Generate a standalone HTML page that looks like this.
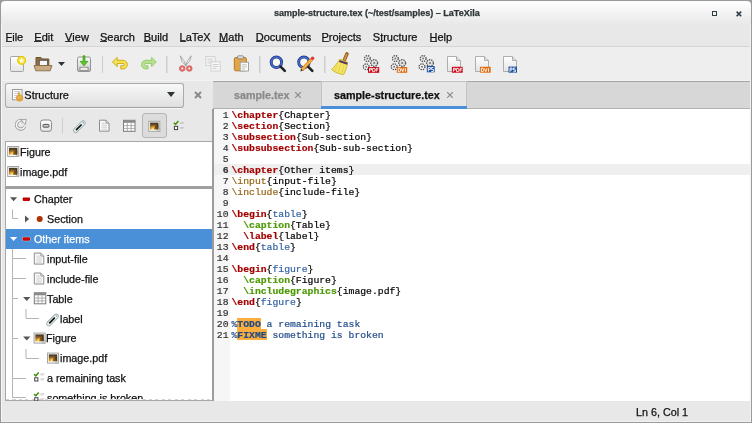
<!DOCTYPE html>
<html><head><meta charset="utf-8">
<style>
*{margin:0;padding:0;box-sizing:border-box}
html,body{width:752px;height:423px;overflow:hidden;background:#9a9a9a}
body{position:relative;font-family:"Liberation Sans",sans-serif;font-size:10.75px;color:#111}
.t,.menu span{-webkit-text-stroke:0.25px currentColor}
.a{position:absolute}
.t{position:absolute;white-space:nowrap;line-height:12px}
#win{position:absolute;left:0;top:0;width:752px;height:423px;background:#e8e8e8;overflow:hidden;will-change:transform}
#frame{position:absolute;left:0;top:0;width:752px;height:423px;border:1px solid #9a9a9a}
#title{position:absolute;left:0;top:0;width:752px;height:25px;background:linear-gradient(#fdfdfd 10%,#e8e8e8)}
#menubar{position:absolute;left:0;top:25px;width:752px;height:21px;background:#e8e8e8}
.menu span{position:absolute;top:31px;white-space:nowrap;line-height:12px;font-size:11px}
.menu u{text-decoration:none;position:relative}
.menu u::after{content:"";position:absolute;left:0;right:0;top:9.6px;height:1px;background:#2e3436}
#sep1{position:absolute;left:0;top:46px;width:752px;height:1px;background:#d5d5d5}
#sep1b{position:absolute;left:0;top:80px;width:752px;height:1px;background:#f3f3f3}
#toolbar{position:absolute;left:0;top:47px;width:752px;height:34px;background:#eeeeee}
.vsep{position:absolute;width:1px;background:#cfcfcf}
#code{position:absolute;left:231.5px;top:109.8px;font-family:"Liberation Mono",monospace;font-size:9.75px;line-height:11px;color:#000;white-space:pre;-webkit-text-stroke:0.2px currentColor}
#gutter{position:absolute;left:214px;top:109px;width:16px;height:292px;background:#f6f6f6}
#nums{position:absolute;left:216px;top:109.8px;font-family:"Liberation Mono",monospace;font-size:9.75px;line-height:11px;color:#333;white-space:pre;text-align:right;width:12.5px;-webkit-text-stroke:0.2px currentColor}
.r{color:#a40000;font-weight:bold}
.g{color:#4e9a06;font-weight:bold}
.o{color:#976617}
.b{color:#3465a4}
.c{color:#234d8c}
.hl{font-weight:bold;color:#204a87}
.tree .t{top:0}
</style></head><body>
<div id="win">
  <div id="title"></div>
  <div class="t" style="left:274px;top:7px;font-size:9px;font-weight:bold;color:#2e3436">sample-structure.tex (~/test/samples) – LaTeXila</div>
  <!-- title buttons -->
  <div class="a" style="left:711.8px;top:11px;width:4.8px;height:4.8px;border:1.6px solid #2e3e44"></div>
  <svg class="a" style="left:736px;top:10.5px" width="6" height="6" viewBox="0 0 6 6"><path d="M0.6 0.6L5.2 5.2M5.2 0.6L0.6 5.2" stroke="#2e3e44" stroke-width="1.6"/></svg>

  <div id="menubar"></div>
  <div class="menu">
    <span style="left:5.5px"><u>F</u>ile</span>
    <span style="left:34.3px"><u>E</u>dit</span>
    <span style="left:65px"><u>V</u>iew</span>
    <span style="left:100px"><u>S</u>earch</span>
    <span style="left:143.7px"><u>B</u>uild</span>
    <span style="left:179.5px"><u>L</u>aTeX</span>
    <span style="left:219.1px"><u>M</u>ath</span>
    <span style="left:255.7px"><u>D</u>ocuments</span>
    <span style="left:321.5px"><u>P</u>rojects</span>
    <span style="left:372.8px">S<u>t</u>ructure</span>
    <span style="left:429.5px"><u>H</u>elp</span>
  </div>
  <div id="sep1"></div>
  <div id="toolbar"></div>
  <div id="sep1b"></div>
  <!-- toolbar separators -->
  <div class="vsep" style="left:102px;top:56px;height:17px"></div>
  <div class="vsep" style="left:166px;top:56px;height:17px"></div>
  <div class="vsep" style="left:259px;top:56px;height:17px"></div>
  <div class="vsep" style="left:324px;top:56px;height:17px"></div>

  <!-- content area -->
  

  <!-- left pane -->
  <div class="a" style="left:5px;top:83px;width:179px;height:25px;border:1px solid #ababab;border-bottom-color:#a0a0a0;border-radius:3px;background:linear-gradient(#f8f8f8,#dfdfdf)"></div><div class="a" style="left:7px;top:108px;width:175px;height:1px;background:#f6f6f6"></div>
  <div class="t" style="left:24.3px;top:88.8px;font-size:11px">Structure</div>
  <svg class="a" style="left:11px;top:88px" width="15" height="14" viewBox="0 0 15 14"><rect x="1.5" y="1.5" width="9.5" height="10.3" fill="#fff" stroke="#9a9a9a"/><path d="M3 3.5H9.5M3 5.5H9.5M3 7.5H6M3 9.5H6" stroke="#b8c4cc" stroke-width="0.8"/><circle cx="8.6" cy="10" r="3.6" fill="#e2a23c"/><rect x="6.8" y="4" width="2.2" height="5" rx="1" fill="#e2a23c"/><path d="M7 10.5L8.6 8.5L10.2 10.5" stroke="#f4d090" stroke-width="0.8" fill="none"/></svg>
  <svg class="a" style="left:167px;top:92px" width="8" height="5"><path d="M0 0H8L4 5Z" fill="#2e3436"/></svg>
  <svg class="a" style="left:194px;top:91px" width="8" height="8"><path d="M1 1L7 7M7 1L1 7" stroke="#8a8a8a" stroke-width="2"/></svg>

  <!-- structure toolbar pressed button -->
  <div class="a" style="left:142px;top:113px;width:25px;height:25px;border:1px solid #b6b6b3;border-radius:3px;background:#dcdcdc"></div>
  <div class="vsep" style="left:62px;top:118px;height:15px"></div>

  <!-- top list box -->
  <div class="a" style="left:5px;top:141px;width:208px;height:47px;border:1px solid #a8a8a8;border-bottom:none;background:#fff"></div>
  <div class="t" style="left:20px;top:145.6px">Figure</div>
  <div class="t" style="left:20px;top:165.5px">image.pdf</div>
  <div class="a" style="left:5px;top:186px;width:208px;height:3px;background:#a0a0a0"></div>

  <!-- tree box -->
  <div class="a" style="left:5px;top:189px;width:208px;height:212px;border:1px solid #a8a8a8;border-top:none;background:#fff"></div>
  <div class="a" style="left:6px;top:229.3px;width:206px;height:19.3px;background:#4a90d9"></div>
  <div class="t" style="left:34px;top:193.0px">Chapter</div>
  <div class="t" style="left:47px;top:212.9px">Section</div>
  <div class="t" style="left:34px;top:232.8px;color:#fff">Other items</div>
  <div class="t" style="left:47px;top:252.8px">input-file</div>
  <div class="t" style="left:47px;top:272.7px">include-file</div>
  <div class="t" style="left:47px;top:292.6px">Table</div>
  <div class="t" style="left:60px;top:312.5px">label</div>
  <div class="t" style="left:46px;top:332.4px">Figure</div>
  <div class="t" style="left:60px;top:352.4px">image.pdf</div>
  <div class="t" style="left:47px;top:372.3px">a remaining task</div>
  <div class="a" style="left:6px;top:399px;width:206px;height:1px;background:repeating-linear-gradient(90deg,#d4d4d4 0 3px,transparent 3px 6.5px)"></div>
  <div class="a" style="left:6px;top:390px;width:206px;height:9px;overflow:hidden"><div class="t" style="left:41px;top:2.2px">something is broken</div></div>

  <!-- pane border -->
  <div class="a" style="left:213px;top:81px;width:1px;height:28px;background:#a0a0a0"></div><div class="a" style="left:212px;top:109px;width:2px;height:292px;background:#9c9c9c"></div>

  <!-- notebook tabs -->
  <div class="a" style="left:213px;top:81px;width:539px;height:27px;background:#d7d7d7;border-top:1px solid #a6a6a6"></div>
  <div class="a" style="left:321px;top:81px;width:146px;height:27px;background:#e6e6e6;border-top:1px solid #c0c0c0;border-left:1px solid #c4c4c4;border-right:1px solid #c4c4c4"></div>
  
  <div class="t" style="left:234px;top:89px;color:#8a8a8a;font-weight:bold">sample.tex</div>
  <div class="t" style="left:334px;top:89px;font-weight:bold">sample-structure.tex</div>
  <svg class="a" style="left:295px;top:92px" width="6" height="6"><path d="M0 0L6 6M6 0L0 6" stroke="#8a8a8a" stroke-width="1.2"/></svg>
  <svg class="a" style="left:447px;top:92px" width="6" height="6"><path d="M0 0L6 6M6 0L0 6" stroke="#8a8a8a" stroke-width="1.2"/></svg>
  <div class="a" style="left:214px;top:108px;width:538px;height:1px;background:#b2b2b2"></div><div class="a" style="left:321px;top:106.2px;width:146px;height:2.5px;background:#4a90d9"></div>

  <!-- editor -->
  <div class="a" style="left:214px;top:109px;width:536px;height:292px;background:#fff"></div>
  <div id="gutter"></div>
  <div class="a" style="left:214px;top:164px;width:536px;height:11px;background:#efefef"></div>
<div class="a" style="left:237.2px;top:318px;width:23.7px;height:11px;background:#fcaf3e"></div><div class="a" style="left:237.2px;top:329px;width:29.5px;height:11px;background:#fcaf3e"></div>
<div id="nums"> 1
 2
 3
 4
 5
<b> 6</b>
 7
 8
 9
10
11
12
13
14
15
16
17
18
19
20
21</div>
<div id="code"><span class="r">\chapter</span>{Chapter}
<span class="r">\section</span>{Section}
<span class="r">\subsection</span>{Sub-section}
<span class="r">\subsubsection</span>{Sub-sub-section}

<span class="r">\chapter</span>{Other items}
<span class="o">\input</span>{input-file}
<span class="o">\include</span>{include-file}

<span class="r">\begin</span>{<span class="b">table</span>}
  <span class="g">\caption</span>{Table}
  <span class="r">\label</span>{label}
<span class="r">\end</span>{<span class="b">table</span>}

<span class="r">\begin</span>{<span class="b">figure</span>}
  <span class="g">\caption</span>{Figure}
  <span class="g">\includegraphics</span>{image.pdf}
<span class="r">\end</span>{<span class="b">figure</span>}

<span class="c">%<span class="hl">TODO</span> a remaining task</span>
<span class="c">%<span class="hl">FIXME</span> something is broken</span></div>


<svg class="a" style="left:0;top:0" width="752" height="423" viewBox="0 0 752 423">
<defs>
 <linearGradient id="gpage" x1="0" y1="0" x2="0" y2="1"><stop offset="0" stop-color="#ffffff"/><stop offset="1" stop-color="#e4e4e4"/></linearGradient>
 <linearGradient id="gsave" x1="0" y1="0" x2="0" y2="1"><stop offset="0" stop-color="#f8f8f8"/><stop offset="0.6" stop-color="#e0e0e0"/><stop offset="1" stop-color="#b4b4b4"/></linearGradient>
 <radialGradient id="gphoto" cx="0.4" cy="0.95" r="0.85"><stop offset="0" stop-color="#fff4a0"/><stop offset="0.3" stop-color="#f0b030"/><stop offset="0.65" stop-color="#8a6028"/><stop offset="1" stop-color="#4a3a24"/></radialGradient>
</defs>

<!-- new document -->
<rect x="10.5" y="56.5" width="13" height="15" rx="1" fill="url(#gpage)" stroke="#a4a4a4"/>
<circle cx="21.6" cy="60.4" r="3.9" fill="#f8e040" stroke="#e4c800" stroke-width="1.2"/>
<path d="M21.6 57.6L22.5 59.5L24.5 59.7L23 61L23.4 63L21.6 62L19.8 63L20.2 61L18.7 59.7L20.7 59.5Z" fill="#fffbe0"/>

<!-- open folder -->
<path d="M36 57.5H41L42.5 59H48.8V66H36Z" fill="#8f6d42" stroke="#6e522c"/>
<rect x="39.3" y="60.3" width="8.3" height="5.3" fill="#f6f6f6" stroke="#555" stroke-width="0.9"/>
<path d="M34 65.5H52L50.2 70.8H35.8Z" fill="#c9ab83" stroke="#8a6c44" stroke-width="0.9"/>
<path d="M58 62H65L61.5 66Z" fill="#2e3436"/>

<!-- save -->
<rect x="77.5" y="57" width="13" height="14.5" rx="1.5" fill="url(#gsave)" stroke="#959595"/>
<rect x="80" y="67.2" width="8" height="3.4" fill="#ececec" stroke="#7a7a7a" stroke-width="0.7"/>
<path d="M83.1 55.8H84.9V61.4H87.8L84 65.8L80.2 61.4H83.1Z" fill="#5cc82c" stroke="#3a9a10" stroke-width="0.8"/>

<!-- separators -->
<rect x="102" y="56" width="1" height="17" fill="#cdcdcd"/>
<rect x="166.5" y="56" width="1" height="17" fill="#cdcdcd"/>
<rect x="259.5" y="56" width="1" height="17" fill="#cdcdcd"/>
<rect x="324.5" y="56" width="1" height="17" fill="#cdcdcd"/>

<!-- undo -->
<path d="M112.5 62L117.2 57.4V60.3H123A4.3 4.3 0 0 1 123 68.9H120.8V65.8H123A1.2 1.2 0 0 0 123 63.4H117.2V66.6Z" fill="#f6e45a" stroke="#c8a400" stroke-width="0.9" stroke-linejoin="round"/>
<!-- redo -->
<g transform="translate(268.8 0) scale(-1 1)"><path d="M112.5 62L117.2 57.4V60.3H123A4.3 4.3 0 0 1 123 68.9H120.8V65.8H123A1.2 1.2 0 0 0 123 63.4H117.2V66.6Z" fill="#b8e290" stroke="#8ec864" stroke-width="0.9" stroke-linejoin="round"/></g>

<!-- cut -->
<path d="M180.3 55.8Q180.5 61.5 186.3 66.2Q184.5 60.5 180.3 55.8ZM191.2 55.8Q191 61.5 185.2 66.2Q187 60.5 191.2 55.8Z" fill="#fafafa" stroke="#a0a0a0" stroke-width="0.9"/>
<circle cx="182.2" cy="68.5" r="2.8" fill="#e27070" stroke="#d45a5a" stroke-width="0.8"/>
<circle cx="189.3" cy="68.5" r="2.8" fill="#e27070" stroke="#d45a5a" stroke-width="0.8"/>
<circle cx="182.3" cy="68.4" r="0.9" fill="#fff"/>
<circle cx="189.2" cy="68.4" r="0.9" fill="#fff"/>

<!-- copy (disabled) -->
<rect x="205.8" y="56.5" width="9.2" height="9" fill="#f6f6f6" stroke="#d2d2d2"/>
<path d="M207.5 59H213M207.5 61H213M207.5 63H211" stroke="#cfcfcf" stroke-width="1"/>
<rect x="211" y="61.8" width="9.2" height="9.2" fill="#f6f6f6" stroke="#d2d2d2"/>
<path d="M212.8 64.5H218.5M212.8 66.5H218.5M212.8 68.5H216.5" stroke="#cfcfcf" stroke-width="1"/>

<!-- paste -->
<rect x="234.3" y="57.5" width="12" height="13.3" rx="1.5" fill="#e2a64a" stroke="#b27a22"/>
<rect x="237.5" y="55.8" width="6" height="3" rx="0.8" fill="#dedede" stroke="#7a7a7a" stroke-width="0.8"/>
<rect x="240.2" y="62.2" width="8.3" height="8.8" fill="#fafafa" stroke="#9a9a9a" stroke-width="0.9"/>
<path d="M241.8 64.8H246.8M241.8 66.8H246.8M241.8 68.8H245" stroke="#b0b0b0" stroke-width="0.8"/>

<!-- find -->
<circle cx="276.4" cy="62.3" r="5.2" fill="#fbfbf2" stroke="#223f96" stroke-width="3"/><circle cx="276.4" cy="62.3" r="5.2" fill="none" stroke="#5272cc" stroke-width="1.2"/>
<path d="M280.6 66.6L284.8 70.8" stroke="#222" stroke-width="2.6" stroke-linecap="round"/>
<!-- find replace -->
<circle cx="303.9" cy="62.3" r="5.2" fill="#fbfbf2" stroke="#223f96" stroke-width="3"/><circle cx="303.9" cy="62.3" r="5.2" fill="none" stroke="#5272cc" stroke-width="1.2"/>
<path d="M308.1 66.6L312.3 70.8" stroke="#222" stroke-width="2.6" stroke-linecap="round"/>
<path d="M302 69.8L311.8 59.2" stroke="#c87818" stroke-width="3.4"/>
<path d="M302 69.8L311.8 59.2" stroke="#f8b040" stroke-width="2"/>
<circle cx="312.6" cy="58.3" r="1.7" fill="#e03838"/>
<path d="M300.3 71.5L301.2 68.6L302.9 70.4Z" fill="#333"/>

<!-- broom -->
<path d="M347 53.8L344.2 60.4" stroke="#a06a28" stroke-width="3.6" stroke-linecap="round"/><path d="M346.6 54.6L344.6 59.4" stroke="#d09a50" stroke-width="1.4" stroke-linecap="round"/>
<path d="M339.8 59.3L347.6 62.2C347.4 66.5 345.5 71 343.6 74.6C339.2 74.2 334.5 72.2 331.6 69.6C334.8 66.4 337.8 62.5 339.8 59.3Z" fill="#f4e466" stroke="#cbb420" stroke-width="0.9"/>
<path d="M337 66L335 70.5M340.5 64L338.5 72.5M344 64.5L342 73.5" stroke="#e0cc40" stroke-width="0.7"/>
<path d="M339.3 61L347.4 63.8" stroke="#5c3566" stroke-width="2"/>

<!-- build icons -->
<g transform="translate(362.8 55.2)"><circle cx="4.6" cy="3.4" r="2.9" fill="#f0f0f0" stroke="#505050" stroke-width="1.3" stroke-dasharray="1.4 0.9"/>
   <circle cx="4.6" cy="3.4" r="1" fill="#777"/>
   <circle cx="11.4" cy="7.8" r="3.4" fill="#e4e4e4" stroke="#505050" stroke-width="1.3" stroke-dasharray="1.5 0.9"/>
   <circle cx="11.4" cy="7.8" r="1.1" fill="#777"/>
   <circle cx="3.4" cy="11.6" r="2.9" fill="#f4f4f4" stroke="#505050" stroke-width="1.3" stroke-dasharray="1.4 0.9"/>
   <circle cx="3.4" cy="11.6" r="1" fill="#777"/></g>
<rect x="368" y="67" width="11.2" height="5.8" fill="#c80010"/>
<path d="M369.5 71.7V68.3H371.5V70H369.5M372.7 68.3H374.3L375 69V71L374.3 71.7H372.7ZM376.2 71.7V68.3H378.4M376.2 70H378" stroke="#fff" stroke-width="0.9" fill="none"/>
<g transform="translate(390.8 55.2)"><circle cx="4.6" cy="3.4" r="2.9" fill="#f0f0f0" stroke="#505050" stroke-width="1.3" stroke-dasharray="1.4 0.9"/>
   <circle cx="4.6" cy="3.4" r="1" fill="#777"/>
   <circle cx="11.4" cy="7.8" r="3.4" fill="#e4e4e4" stroke="#505050" stroke-width="1.3" stroke-dasharray="1.5 0.9"/>
   <circle cx="11.4" cy="7.8" r="1.1" fill="#777"/>
   <circle cx="3.4" cy="11.6" r="2.9" fill="#f4f4f4" stroke="#505050" stroke-width="1.3" stroke-dasharray="1.4 0.9"/>
   <circle cx="3.4" cy="11.6" r="1" fill="#777"/></g>
<rect x="396.8" y="67" width="10.4" height="5.8" fill="#e06a10"/>
<path d="M398.3 68.3H399.9L400.6 69V71L399.9 71.7H398.3ZM401.5 68.3L402.7 71.7L403.9 68.3M405.4 68.3V71.7" stroke="#fff" stroke-width="0.9" fill="none"/>
<g transform="translate(418.6 55.2)"><circle cx="4.6" cy="3.4" r="2.9" fill="#f0f0f0" stroke="#505050" stroke-width="1.3" stroke-dasharray="1.4 0.9"/>
   <circle cx="4.6" cy="3.4" r="1" fill="#777"/>
   <circle cx="11.4" cy="7.8" r="3.4" fill="#e4e4e4" stroke="#505050" stroke-width="1.3" stroke-dasharray="1.5 0.9"/>
   <circle cx="11.4" cy="7.8" r="1.1" fill="#777"/>
   <circle cx="3.4" cy="11.6" r="2.9" fill="#f4f4f4" stroke="#505050" stroke-width="1.3" stroke-dasharray="1.4 0.9"/>
   <circle cx="3.4" cy="11.6" r="1" fill="#777"/></g>
<rect x="426.8" y="66" width="7.9" height="6.3" fill="#1f52a4"/>
<path d="M428.3 71.5V67.5H430.3V69.4H428.3M433.4 67.5H431.4V69.4H433.4V71.5H431.3" stroke="#fff" stroke-width="0.9" fill="none"/>

<!-- view icons -->
<g transform="translate(447 56)"><path d="M0.5 0.5H9.5L13.5 4.5V15.5H0.5Z" fill="url(#gpage)" stroke="#aeaeae"/>
   <path d="M9.5 0.5V4.5H13.5" fill="#e0e0e0" stroke="#aeaeae"/></g>
<rect x="451.9" y="66.8" width="10.8" height="5.9" fill="#c80010"/>
<path d="M453.4 71.7V68.3H455.4V70H453.4M456.6 68.3H458.2L458.9 69V71L458.2 71.7H456.6ZM460.1 71.7V68.3H462.2M460.1 70H461.8" stroke="#fff" stroke-width="0.9" fill="none"/>
<g transform="translate(475 56)"><path d="M0.5 0.5H9.5L13.5 4.5V15.5H0.5Z" fill="url(#gpage)" stroke="#aeaeae"/>
   <path d="M9.5 0.5V4.5H13.5" fill="#e0e0e0" stroke="#aeaeae"/></g>
<rect x="479.9" y="66.8" width="10.8" height="5.9" fill="#e06a10"/>
<path d="M481.4 68.3H483L483.7 69V71L483 71.7H481.4ZM484.6 68.3L485.8 71.7L487 68.3M488.5 68.3V71.7" stroke="#fff" stroke-width="0.9" fill="none"/>
<g transform="translate(503 56)"><path d="M0.5 0.5H9.5L13.5 4.5V15.5H0.5Z" fill="url(#gpage)" stroke="#aeaeae"/>
   <path d="M9.5 0.5V4.5H13.5" fill="#e0e0e0" stroke="#aeaeae"/></g>
<rect x="508.5" y="66.6" width="8.5" height="6.1" fill="#1f52a4"/>
<path d="M510 71.8V68H512V69.9H510M515.4 68H513.4V69.9H515.4V71.8H513.3" stroke="#fff" stroke-width="0.9" fill="none"/>

<!-- structure toolbar -->
<path d="M23.6 121.6A4.3 4.3 0 1 0 24.6 126.6" fill="none" stroke="#9a9a9a" stroke-width="3.2"/>
<path d="M23.6 121.6A4.3 4.3 0 1 0 24.6 126.6" fill="none" stroke="#f6f6f6" stroke-width="1.5"/>
<path d="M20.8 120.2L26.2 119.3L25.4 124.6Z" fill="#f6f6f6" stroke="#9a9a9a" stroke-width="0.9"/>
<rect x="40.5" y="120" width="11" height="11.3" rx="2.5" fill="url(#gpage)" stroke="#8a8a8a"/>
<rect x="43" y="124.4" width="6" height="2.8" rx="0.8" fill="#c8c8c8" stroke="#555" stroke-width="1"/>
<rect x="62" y="118" width="1" height="15.5" fill="#cdcdcd"/>
<g transform="translate(73.3 118.8)"><path d="M2.3 11.7L9.8 4.2" stroke="#9aaaaa" stroke-width="5.2" stroke-linecap="round"/>
   <path d="M2.3 11.7L9.8 4.2" stroke="#e4f2f2" stroke-width="3.4" stroke-linecap="round"/>
   <path d="M3.2 10.8L7.8 6.2" stroke="#111" stroke-width="1.7" stroke-linecap="round"/>
   <circle cx="9.9" cy="4.1" r="0.8" fill="#9aaaaa"/></g>
<g transform="translate(99 119.7)"><path d="M0.5 0.5H7L10 3.5V11.5H0.5Z" fill="#fafafa" stroke="#8c8c8c"/>
   <path d="M7 0.5V3.5H10" fill="#ddd" stroke="#8c8c8c" stroke-width="0.8"/>
   <path d="M2.5 3.5H6M2.5 5.5H8M2.5 7.5H8M2.5 9.5H8" stroke="#c4c4c4" stroke-width="0.8"/></g>
<g transform="translate(123 119.8)"><rect x="0.5" y="0.5" width="11.5" height="11" fill="#fff" stroke="#7a7a7a"/>
   <rect x="0.5" y="0.5" width="11.5" height="2.5" fill="#8a8a8a"/>
   <path d="M4.3 3V11.5M8.2 3V11.5M0.5 5.8H12M0.5 8.6H12" stroke="#9a9a9a" stroke-width="0.8"/></g>
<g transform="translate(148.3 120.8)"><rect x="0.5" y="0.5" width="11" height="10" fill="#fbfbfb" stroke="#a4a4a4"/>
   <rect x="1.8" y="1.8" width="8.4" height="6.9" fill="url(#gphoto)"/>
   <path d="M5.5 8.7L7.2 4.5L7.8 6.3L9 3.8L10.2 5V8.7Z" fill="#2a1e10" opacity="0.55"/>
   <path d="M8.3 10.5L11.5 7.3V10.5Z" fill="#d8d8d8" stroke="#a4a4a4" stroke-width="0.6"/></g>
<g transform="translate(173.2 120.2)"><path d="M0.6 2.6L2.3 4.2L5.2 0.9" fill="none" stroke="#3f8f06" stroke-width="1.5"/>
   <rect x="1.2" y="6.2" width="3.2" height="3.2" fill="#fff" stroke="#444" stroke-width="1"/>
   <path d="M7 2.3H11M7 3.3H10M7 7.3H11M7 8.3H10" stroke="#c0c0c0" stroke-width="0.8"/></g>

<!-- list icons -->
<g transform="translate(7.2 146)"><rect x="0.5" y="0.5" width="11" height="10" fill="#fbfbfb" stroke="#a4a4a4"/>
   <rect x="1.8" y="1.8" width="8.4" height="6.9" fill="url(#gphoto)"/>
   <path d="M5.5 8.7L7.2 4.5L7.8 6.3L9 3.8L10.2 5V8.7Z" fill="#2a1e10" opacity="0.55"/>
   <path d="M8.3 10.5L11.5 7.3V10.5Z" fill="#d8d8d8" stroke="#a4a4a4" stroke-width="0.6"/></g>
<g transform="translate(7.2 166)"><rect x="0.5" y="0.5" width="11" height="10" fill="#fbfbfb" stroke="#a4a4a4"/>
   <rect x="1.8" y="1.8" width="8.4" height="6.9" fill="url(#gphoto)"/>
   <path d="M5.5 8.7L7.2 4.5L7.8 6.3L9 3.8L10.2 5V8.7Z" fill="#2a1e10" opacity="0.55"/>
   <path d="M8.3 10.5L11.5 7.3V10.5Z" fill="#d8d8d8" stroke="#a4a4a4" stroke-width="0.6"/></g>

<!-- tree -->
<path d="M10 197.3H17.2L13.6 201.3Z" fill="#555"/>
<rect x="22.7" y="197.4" width="7.3" height="3.5" rx="0.8" fill="#c00000"/>
<path d="M12.5 209.5V218.5H18" fill="none" stroke="#b4b4b4"/>
<path d="M25 215.6V222.4L29.1 219Z" fill="#555"/>
<circle cx="39.7" cy="218.9" r="3" fill="#b03000"/>
<path d="M10 236.9H17.2L13.6 241.1Z" fill="#fff"/>
<rect x="22.2" y="236.8" width="8.3" height="4.5" rx="1" fill="#9cc8f0"/>
<rect x="22.7" y="237.3" width="7.3" height="3.5" rx="0.8" fill="#d00000"/>
<path d="M12.5 249V397.5M12.5 258.5H26M12.5 278.5H26M12.5 298.5H18M12.5 338.5H18M12.5 378.5H26M12.5 397.5H26M26 309V318.5H39M26 349V358.5H39" fill="none" stroke="#b4b4b4"/>
<g transform="translate(33.8 252.6)"><path d="M0.5 0.5H7L10 3.5V11.5H0.5Z" fill="#fafafa" stroke="#8c8c8c"/>
   <path d="M7 0.5V3.5H10" fill="#ddd" stroke="#8c8c8c" stroke-width="0.8"/>
   <path d="M2.5 3.5H6M2.5 5.5H8M2.5 7.5H8M2.5 9.5H8" stroke="#c4c4c4" stroke-width="0.8"/></g>
<g transform="translate(33.8 272.5)"><path d="M0.5 0.5H7L10 3.5V11.5H0.5Z" fill="#fafafa" stroke="#8c8c8c"/>
   <path d="M7 0.5V3.5H10" fill="#ddd" stroke="#8c8c8c" stroke-width="0.8"/>
   <path d="M2.5 3.5H6M2.5 5.5H8M2.5 7.5H8M2.5 9.5H8" stroke="#c4c4c4" stroke-width="0.8"/></g>
<path d="M23.1 297.1H30.4L26.75 301Z" fill="#555"/>
<g transform="translate(33.8 292.3)"><rect x="0.5" y="0.5" width="11.5" height="11" fill="#fff" stroke="#7a7a7a"/>
   <rect x="0.5" y="0.5" width="11.5" height="2.5" fill="#8a8a8a"/>
   <path d="M4.3 3V11.5M8.2 3V11.5M0.5 5.8H12M0.5 8.6H12" stroke="#9a9a9a" stroke-width="0.8"/></g>
<g transform="translate(46.5 312)"><path d="M2.3 11.7L9.8 4.2" stroke="#9aaaaa" stroke-width="5.2" stroke-linecap="round"/>
   <path d="M2.3 11.7L9.8 4.2" stroke="#e4f2f2" stroke-width="3.4" stroke-linecap="round"/>
   <path d="M3.2 10.8L7.8 6.2" stroke="#111" stroke-width="1.7" stroke-linecap="round"/>
   <circle cx="9.9" cy="4.1" r="0.8" fill="#9aaaaa"/></g>
<path d="M23.1 336.6H30.4L26.75 340.5Z" fill="#555"/>
<g transform="translate(33.6 332.6)"><rect x="0.5" y="0.5" width="11" height="10" fill="#fbfbfb" stroke="#a4a4a4"/>
   <rect x="1.8" y="1.8" width="8.4" height="6.9" fill="url(#gphoto)"/>
   <path d="M5.5 8.7L7.2 4.5L7.8 6.3L9 3.8L10.2 5V8.7Z" fill="#2a1e10" opacity="0.55"/>
   <path d="M8.3 10.5L11.5 7.3V10.5Z" fill="#d8d8d8" stroke="#a4a4a4" stroke-width="0.6"/></g>
<g transform="translate(47 352.6)"><rect x="0.5" y="0.5" width="11" height="10" fill="#fbfbfb" stroke="#a4a4a4"/>
   <rect x="1.8" y="1.8" width="8.4" height="6.9" fill="url(#gphoto)"/>
   <path d="M5.5 8.7L7.2 4.5L7.8 6.3L9 3.8L10.2 5V8.7Z" fill="#2a1e10" opacity="0.55"/>
   <path d="M8.3 10.5L11.5 7.3V10.5Z" fill="#d8d8d8" stroke="#a4a4a4" stroke-width="0.6"/></g>
<g transform="translate(33.5 371.6)"><path d="M0.6 2.6L2.3 4.2L5.2 0.9" fill="none" stroke="#3f8f06" stroke-width="1.5"/>
   <rect x="1.2" y="6.2" width="3.2" height="3.2" fill="#fff" stroke="#444" stroke-width="1"/>
   <path d="M7 2.3H11M7 3.3H10M7 7.3H11M7 8.3H10" stroke="#c0c0c0" stroke-width="0.8"/></g>
<g transform="translate(33.5 391.5)"><path d="M0.6 2.6L2.3 4.2L5.2 0.9" fill="none" stroke="#3f8f06" stroke-width="1.5"/>
   <rect x="1.2" y="6.2" width="3.2" height="3.2" fill="#fff" stroke="#444" stroke-width="1"/>
   <path d="M7 2.3H11M7 3.3H10M7 7.3H11M7 8.3H10" stroke="#c0c0c0" stroke-width="0.8"/></g>
</svg>

  <!-- status bar -->
  <div class="a" style="left:0;top:401px;width:750px;height:21px;background:#e8e8e8"></div>
  <div class="t" style="left:636px;top:406px">Ln 6, Col 1</div>
<div class="a" style="left:1px;top:24px;width:1px;height:398px;background:#f6f6f6"></div><div class="a" style="left:750px;top:24px;width:1px;height:398px;background:#f2f2f2"></div><div class="a" style="left:1px;top:421px;width:750px;height:1px;background:#f2f2f2"></div><div id="frame"></div><svg class="a" style="left:0;top:0" width="5" height="5"><path d="M0 0H5V1A4 4 0 0 0 1 5H0Z" fill="#9a9a9a"/></svg><svg class="a" style="left:747px;top:0" width="5" height="5"><path d="M5 0H0V1A4 4 0 0 1 4 5H5Z" fill="#9a9a9a"/></svg>
</div>
</body></html>
